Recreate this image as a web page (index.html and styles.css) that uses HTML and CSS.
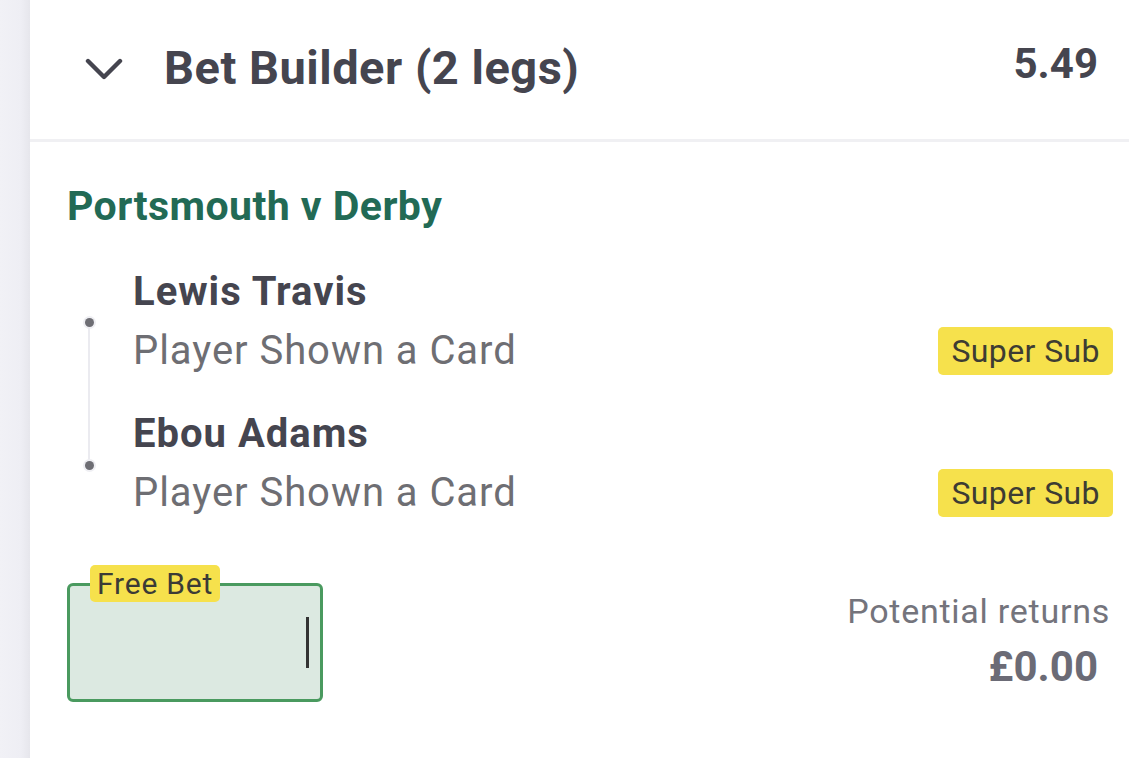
FILE: index.html
```html
<!DOCTYPE html>
<html lang="en">
<head>
<meta charset="utf-8">
<title>Bet Builder</title>
<link rel="stylesheet" href="styles.css">
</head>
<body>
<div class="app">
  <div class="rail"></div>
  <div class="panel">
    <div class="header">
      <svg class="chevron" width="38" height="24" viewBox="0 0 38 24" aria-hidden="true">
        <polyline points="3,3 19,19 35,3" fill="none" stroke="#45454f" stroke-width="4.4" stroke-linecap="round" stroke-linejoin="round"/>
      </svg>
      <div class="title">Bet Builder (2 legs)</div>
      <div class="odds">5.49</div>
    </div>
    <div class="content">
      <div class="match">Portsmouth v Derby</div>
      <div class="legs">
        <div class="timeline">
          <span class="dot"></span>
          <span class="line"></span>
          <span class="dot"></span>
        </div>
        <div class="leg-list">
          <div class="leg">
            <div class="name">Lewis Travis</div>
            <div class="desc-row">
              <span class="desc">Player Shown a Card</span>
              <span class="badge">Super Sub</span>
            </div>
          </div>
          <div class="leg">
            <div class="name">Ebou Adams</div>
            <div class="desc-row">
              <span class="desc">Player Shown a Card</span>
              <span class="badge">Super Sub</span>
            </div>
          </div>
        </div>
      </div>
      <div class="footer">
        <div class="stake">
          <span class="stake-label">Free Bet</span>
          <div class="stake-box"><span class="caret"></span></div>
        </div>
        <div class="returns">
          <div class="returns-label">Potential returns</div>
          <div class="returns-value">£0.00</div>
        </div>
      </div>
    </div>
  </div>
</div>
</body>
</html>
```

FILE: styles.css
```css
* { box-sizing: border-box; }
html, body {
  margin: 0;
  padding: 0;
  background: #ffffff;
}
body {
  font-family: Roboto, "Liberation Sans", Arial, sans-serif;
  width: 1129px;
  height: 758px;
  overflow: hidden;
}
.app {
  display: flex;
  height: 758px;
}
.rail {
  width: 30px;
  flex: none;
  background: linear-gradient(to right, #f1f1f6 0%, #eeeef4 70%, #e6e6ec 100%);
}
.panel {
  flex: 1;
  background: #ffffff;
  display: flex;
  flex-direction: column;
}
.header {
  height: 142px;
  border-bottom: 3px solid #f0f0f3;
  display: flex;
  align-items: center;
  padding: 0 31px 4px 55px;
}
.chevron {
  flex: none;
  display: block;
  margin-top: 4px;
}
.title {
  margin-left: 41px;
  font-size: 47px;
  line-height: 46px;
  font-weight: 700;
  letter-spacing: 0.5px;
  color: #45454f;
  flex: 1;
}
.odds {
  font-size: 42px;
  line-height: 42px;
  font-weight: 700;
  color: #45454f;
  margin-bottom: 8px;
}
.content {
  padding: 40px 16px 0 37px;
  display: flex;
  flex-direction: column;
}
.match {
  font-size: 41px;
  line-height: 48px;
  font-weight: 700;
  letter-spacing: 0.45px;
  color: #226a55;
}
.legs {
  display: flex;
  margin-top: 38px;
}
.timeline {
  width: 44px;
  flex: none;
  display: flex;
  flex-direction: column;
  align-items: center;
  padding-top: 50px;
}
.dot {
  width: 9px;
  height: 9px;
  border-radius: 50%;
  background: #6e6e74;
  box-shadow: 0 0 0 2px #efeff3;
}
.line {
  width: 2px;
  height: 134px;
  background: #ebebf0;
}
.leg-list {
  flex: 1;
  margin-left: 22px;
  display: flex;
  flex-direction: column;
  gap: 35px;
}
.name {
  font-size: 40px;
  line-height: 48px;
  font-weight: 700;
  letter-spacing: 1px;
  color: #45454f;
}
.desc-row {
  margin-top: 11px;
  display: flex;
  justify-content: space-between;
  align-items: center;
}
.desc {
  font-size: 40px;
  line-height: 48px;
  letter-spacing: 0.95px;
  color: #6e6e73;
}
.badge {
  height: 48px;
  line-height: 48px;
  padding: 0 13px;
  background: #f6e14c;
  border-radius: 5px;
  font-size: 32px;
  letter-spacing: 0.4px;
  color: #3d3c33;
}
.footer {
  margin-top: 48px;
  display: flex;
  justify-content: space-between;
  align-items: flex-start;
}
.stake {
  position: relative;
  padding-top: 18px;
}
.stake-label {
  position: absolute;
  top: 0;
  left: 23px;
  height: 37px;
  line-height: 37px;
  padding: 0 7px;
  background: #f6e14c;
  border-radius: 5px;
  font-size: 30px;
  letter-spacing: 0.8px;
  color: #3b3b36;
}
.stake-box {
  width: 256px;
  height: 119px;
  border: 3px solid #4a9a5f;
  border-radius: 6px;
  background: #dce9e1;
  display: flex;
  justify-content: flex-end;
  align-items: center;
  padding-right: 11px;
}
.caret {
  width: 3px;
  height: 51px;
  background: #333333;
}
.returns {
  margin-top: 26px;
  text-align: right;
  display: flex;
  flex-direction: column;
  align-items: flex-end;
}
.returns-label {
  font-size: 34px;
  line-height: 40px;
  letter-spacing: 0.75px;
  color: #74747c;
  margin-right: 3px;
}
.returns-value {
  margin-top: 12px;
  margin-right: 15px;
  font-size: 42px;
  line-height: 48px;
  font-weight: 700;
  color: #6b6b76;
}
```
